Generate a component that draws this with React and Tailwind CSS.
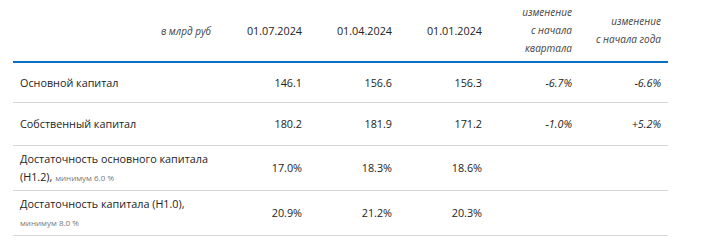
export default function App() {
  const rows = [
    { label: <span>Основной капитал</span>, vals: ["146.1", "156.6", "156.3", "-6.7%", "-6.6%"], h: "h-[40px]" },
    { label: <span>Собственный капитал</span>, vals: ["180.2", "181.9", "171.2", "-1.0%", "+5.2%"], h: "h-[43px]" },
    {
      label: (
        <span>
          Достаточность основного капитала<br />(Н1.2), <span className="text-[8px] text-[#777]">минимум 6.0 %</span>
        </span>
      ),
      vals: ["17.0%", "18.3%", "18.6%", "", ""],
      h: "h-[45px]",
    },
    {
      label: (
        <span>
          Достаточность капитала (Н1.0),<br /><span className="text-[8px] text-[#777]">минимум 8.0 %</span>
        </span>
      ),
      vals: ["20.9%", "21.2%", "20.3%", "", ""],
      h: "h-[45px]",
    },
  ];
  return (
    <div className="w-[710px] h-[252px] bg-white text-[#222] text-[10.8px] leading-[18px]" style={{ fontFamily: '"Open Sans", sans-serif' }}>
      <div className="ml-[13px] w-[655px]">
        <div className="grid grid-cols-[205px_90px_90px_90px_90px_90px] h-[63px] items-center border-b-2 border-[#0a6fc2]">
          <div className="text-right pr-[7px] italic text-[10px] text-[#444]">в млрд руб</div>
          <div className="text-right pr-[6px]">01.07.2024</div>
          <div className="text-right pr-[6px]">01.04.2024</div>
          <div className="text-right pr-[6px]">01.01.2024</div>
          <div className="text-right pr-[6px] italic text-[10px] text-[#444] -mt-[2px]">изменение<br />с начала<br />квартала</div>
          <div className="text-right pr-[7px] italic text-[10px] text-[#444] -mt-[2px]">изменение<br />с начала года</div>
        </div>
        {rows.map((r, i) => (
          <div key={i} className={`grid grid-cols-[205px_90px_90px_90px_90px_90px] items-center border-b border-[#d6d6d6] ${r.h}`}>
            <div className="pl-[7px]">{r.label}</div>
            {r.vals.map((v, j) => (
              <div key={j} className={`text-right ${j === 4 ? "pr-[7px]" : "pr-[6px]"} ${j >= 3 ? "italic" : ""}`}>{v}</div>
            ))}
          </div>
        ))}
      </div>
    </div>
  );
}
